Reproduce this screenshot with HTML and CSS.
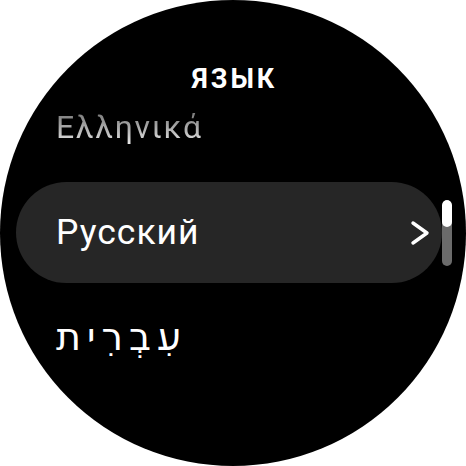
FILE: index.html
```html
<!DOCTYPE html>
<html>
<head>
<meta charset="utf-8">
<link rel="stylesheet" href="styles.css">
</head>
<body>
<div class="watch">
  <div class="title">ЯЗЫК</div>
  <div class="item item-faded"><span class="fade-text">Ελληνικά</span></div>
  <div class="pill">
    <span class="pill-label">Русский</span>
    <svg class="chevron" width="20" height="26" viewBox="0 0 20 26"><path d="M3 3 L17 13 L3 23" fill="none" stroke="#fff" stroke-width="3.4" stroke-linecap="round" stroke-linejoin="round"/></svg>
  </div>
  <div class="item item-hebrew"><span class="hebrew" dir="rtl">עִבְרִית</span></div>
  <div class="scrollbar"><div class="thumb"></div></div>
</div>
</body>
</html>
```
FILE: styles.css
```css
html, body {
  margin: 0;
  padding: 0;
  background: #fff;
}
.watch {
  position: relative;
  width: 466px;
  height: 466px;
  border-radius: 50%;
  background: #000;
  overflow: hidden;
  display: flex;
  flex-direction: column;
  font-family: Roboto, "Noto Sans", sans-serif;
  color: #fff;
  box-sizing: border-box;
  padding-top: 66px;
}
.title {
  font-weight: 700;
  font-size: 27px;
  line-height: 27px;
  text-align: center;
  letter-spacing: 3px;
  padding-left: 3px;
}
.item {
  padding-left: 56px;
}
.item-faded {
  margin-top: 19px;
  font-size: 32px;
  line-height: 31px;
  letter-spacing: 1.6px;
}
.fade-text {
  background: linear-gradient(to bottom, #6a6a6a 0%, #a8a8a8 50%, #f0f0f0 100%);
  -webkit-background-clip: text;
  background-clip: text;
  color: transparent;
}
.pill {
  margin-top: 39px;
  margin-left: 16px;
  width: 426px;
  height: 101px;
  border-radius: 50.5px;
  background: #262626;
  display: flex;
  align-items: center;
  justify-content: space-between;
  box-sizing: border-box;
  padding-left: 40px;
  padding-right: 12px;
}
.pill-label {
  font-size: 35.5px;
  line-height: 35px;
  letter-spacing: 1px;
}
.chevron {
  display: block;
}
.item-hebrew {
  margin-top: 35px;
  font-family: "DejaVu Sans", "Open Sans", sans-serif;
  font-size: 38px;
  line-height: 38px;
}
.hebrew {
  letter-spacing: 6px;
}
.scrollbar {
  position: absolute;
  left: 442px;
  top: 200px;
  width: 10px;
  height: 66px;
  border-radius: 5px;
  background: #6b6b6b;
  overflow: hidden;
}
.thumb {
  height: 27px;
  border-radius: 5px;
  background: #fff;
}
```
